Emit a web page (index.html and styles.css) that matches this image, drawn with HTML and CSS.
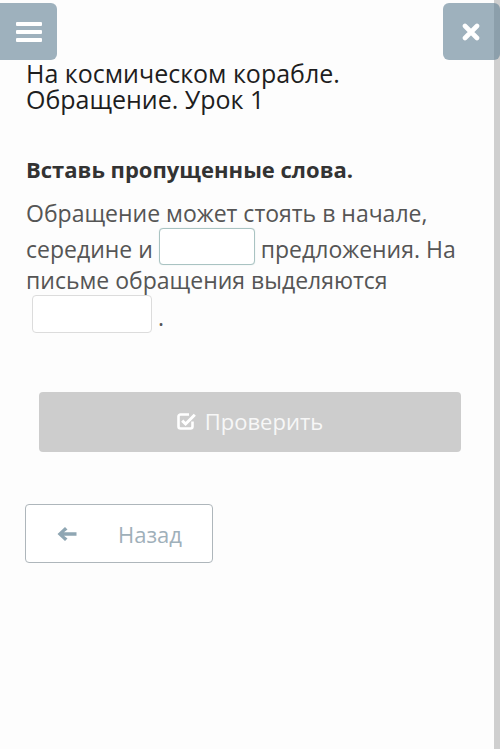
FILE: index.html
```html
<!DOCTYPE html>
<html lang="ru">
<head>
    <meta charset="UTF-8">
    <meta name="viewport" content="width=device-width, initial-scale=1.0">
    <title>Обращение. Урок 1</title>
    <link rel="stylesheet" href="styles.css">
</head>
<body>
    <div class="page">
        <div class="content">
            <header class="topbar">
                <button class="icon-btn menu-btn" type="button">
                    <svg width="26" height="20" viewBox="0 0 26 20">
                        <rect x="0" y="0" width="26" height="4" rx="1" fill="#fff"/>
                        <rect x="0" y="8" width="26" height="4" rx="1" fill="#fff"/>
                        <rect x="0" y="16" width="26" height="4" rx="1" fill="#fff"/>
                    </svg>
                </button>
                <button class="icon-btn close-btn" type="button">
                    <svg width="18" height="18" viewBox="0 0 18 18">
                        <path d="M3 3 L15 15 M15 3 L3 15" stroke="#fff" stroke-width="4.6" stroke-linecap="round"/>
                    </svg>
                </button>
            </header>

            <main class="lesson">
                <h1 class="lesson-title">На космическом корабле.<br>Обращение. Урок 1</h1>
                <h2 class="task-title">Вставь пропущенные слова.</h2>
                <p class="task-text">Обращение может стоять в начале, середине и <span class="gap gap-active"></span> предложения. На письме обращения выделяются <span class="gap gap-wide"></span> .</p>

                <button class="check-btn" type="button">
                    <svg width="20" height="20" viewBox="0 0 20 20">
                        <path d="M15.5 10.5 V15.5 A2 2 0 0 1 13.5 17.5 H3.5 A2 2 0 0 1 1.5 15.5 V5.5 A2 2 0 0 1 3.5 3.5 H12" fill="none" stroke="#fff" stroke-width="2.6"/>
                        <path d="M5.2 9.6 L8.6 13 L17.8 3.8" fill="none" stroke="#fff" stroke-width="3"/>
                    </svg>
                    Проверить
                </button>

                <button class="back-btn" type="button">
                    <svg width="20" height="16" viewBox="0 0 20 16">
                        <path d="M0.5 8 L8 1 L10.5 3.5 L7 6.3 H19.5 V9.7 H7 L10.5 12.5 L8 15 Z" fill="#8fa6b3"/>
                    </svg>
                    <span>Назад</span>
                </button>
            </main>
        </div>
        <div class="scroll-track"></div>
    </div>
</body>
</html>
```

FILE: styles.css
```css
body {
    margin: 0;
    padding: 0;
    background: #fdfdfd;
    font-family: "Open Sans", "Noto Sans", sans-serif;
    color: #222;
}

.page {
    display: flex;
    width: 500px;
    min-height: 749px;
}

.content {
    width: 494px;
}

.scroll-track {
    width: 6px;
    background: #cfcfcf;
}

.topbar {
    display: flex;
    justify-content: space-between;
    padding-top: 3px;
    height: 57px;
}

.icon-btn {
    display: flex;
    align-items: center;
    justify-content: center;
    border: none;
    padding: 0;
    height: 57px;
    border-radius: 6px;
    background: rgba(95, 127, 147, 0.6);
    cursor: pointer;
}

.menu-btn {
    width: 63px;
    margin-left: -6px;
    padding-left: 6px;
}

.close-btn {
    width: 57px;
    margin-right: -6px;
    padding-right: 2px;
    position: relative;
    z-index: 2;
}

.lesson {
    padding: 0 26px;
}

.lesson-title {
    margin: 0;
    font-size: 25px;
    font-weight: normal;
    line-height: 26px;
    color: #1e1e1e;
}

.task-title {
    margin: 44px 0 0;
    font-size: 22px;
    font-weight: bold;
    line-height: 26px;
    color: #333;
}

.task-text {
    margin: 16px 0 0;
    font-size: 23px;
    line-height: 30px;
    color: #555;
}

.gap {
    display: inline-block;
    width: 96px;
    height: 37px;
    box-sizing: border-box;
    border: 1px solid #dcdcdc;
    border-radius: 4px;
    background: #fff;
    vertical-align: -7px;
}

.gap-active {
    border-color: #a9c3c2;
    box-shadow: 0 0 1px rgba(120, 160, 160, 0.4);
}

.gap-wide {
    width: 120px;
    height: 38px;
    margin-left: 6px;
    vertical-align: -7px;
}

.check-btn {
    display: flex;
    align-items: center;
    justify-content: center;
    gap: 8px;
    width: 422px;
    height: 60px;
    margin: 59px 0 0 13px;
    border: none;
    border-radius: 4px;
    background: #cdcdcd;
    color: #f7f7f7;
    font-family: "Open Sans", "Noto Sans", sans-serif;
    font-size: 22px;
    padding: 0 0 2px;
}

.back-btn {
    display: flex;
    align-items: center;
    width: 188px;
    height: 59px;
    margin: 52px 0 0 -1px;
    padding: 0 0 0 31px;
    border: 1px solid #aeb6bb;
    border-radius: 4px;
    background: #fff;
    color: #9fb0ba;
    font-family: "Open Sans", "Noto Sans", sans-serif;
    font-size: 22px;
}

.back-btn span {
    margin-left: 41px;
}
```
